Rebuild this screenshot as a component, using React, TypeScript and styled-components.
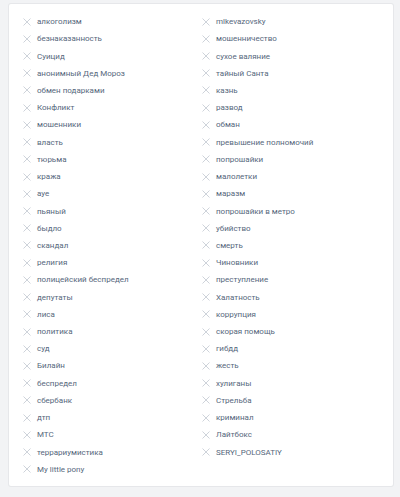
import styled, { createGlobalStyle } from 'styled-components';

const Global = createGlobalStyle`
  html, body {
    margin: 0;
    background: #f2f3f5;
  }
`;

const Page = styled.div`
  padding: 4px 7px 10px 9px;
`;

const Card = styled.div`
  background: #fff;
  border-radius: 2px;
  box-shadow: 0 0 0 1px #e6e7ea;
  display: grid;
  grid-template-columns: 179px 1fr;
  padding: 9px 0 8px 12px;
  font-family: Roboto, "Noto Sans", sans-serif;
  font-size: 8px;
  color: #56677c;
`;

const Column = styled.ul`
  list-style: none;
  margin: 0;
  padding: 0;
`;

const Row = styled.li`
  display: flex;
  align-items: center;
  height: 17.23px;
  gap: 6px;
  padding-left: 2px;
  white-space: nowrap;
`;

const Remove = styled.svg`
  flex: none;
  width: 8px;
  height: 8px;
`;

const Cross = () => (
  <Remove viewBox="0 0 8 8">
    <path d="M0.5 0.5L7.5 7.5M7.5 0.5L0.5 7.5" stroke="#c2c8d0" strokeWidth="0.8" />
  </Remove>
);

const left = [
  'алкоголизм', 'безнаказанность', 'Суицид', 'анонимный Дед Мороз', 'обмен подарками',
  'Конфликт', 'мошенники', 'власть', 'тюрьма', 'кража', 'ауе', 'пьяный', 'быдло',
  'скандал', 'религия', 'полицейский беспредел', 'депутаты', 'лиса', 'политика', 'суд',
  'Билайн', 'беспредел', 'сбербанк', 'дтп', 'МТС', 'террариумистика', 'My little pony',
];

const right = [
  'mlkevazovsky', 'мошенничество', 'сухое валяние', 'тайный Санта', 'казнь', 'развод',
  'обман', 'превышение полномочий', 'попрошайки', 'малолетки', 'маразм',
  'попрошайки в метро', 'убийство', 'смерть', 'Чиновники', 'преступление', 'Халатность',
  'коррупция', 'скорая помощь', 'гибдд', 'жесть', 'хулиганы', 'Стрельба', 'криминал',
  'Лайтбокс', 'SERYI_POLOSATIY',
];

export default function App() {
  return (
    <Page>
      <Global />
      <Card>
        {[left, right].map((col, i) => (
          <Column key={i}>
            {col.map((t) => (
              <Row key={t}>
                <Cross />
                {t}
              </Row>
            ))}
          </Column>
        ))}
      </Card>
    </Page>
  );
}
